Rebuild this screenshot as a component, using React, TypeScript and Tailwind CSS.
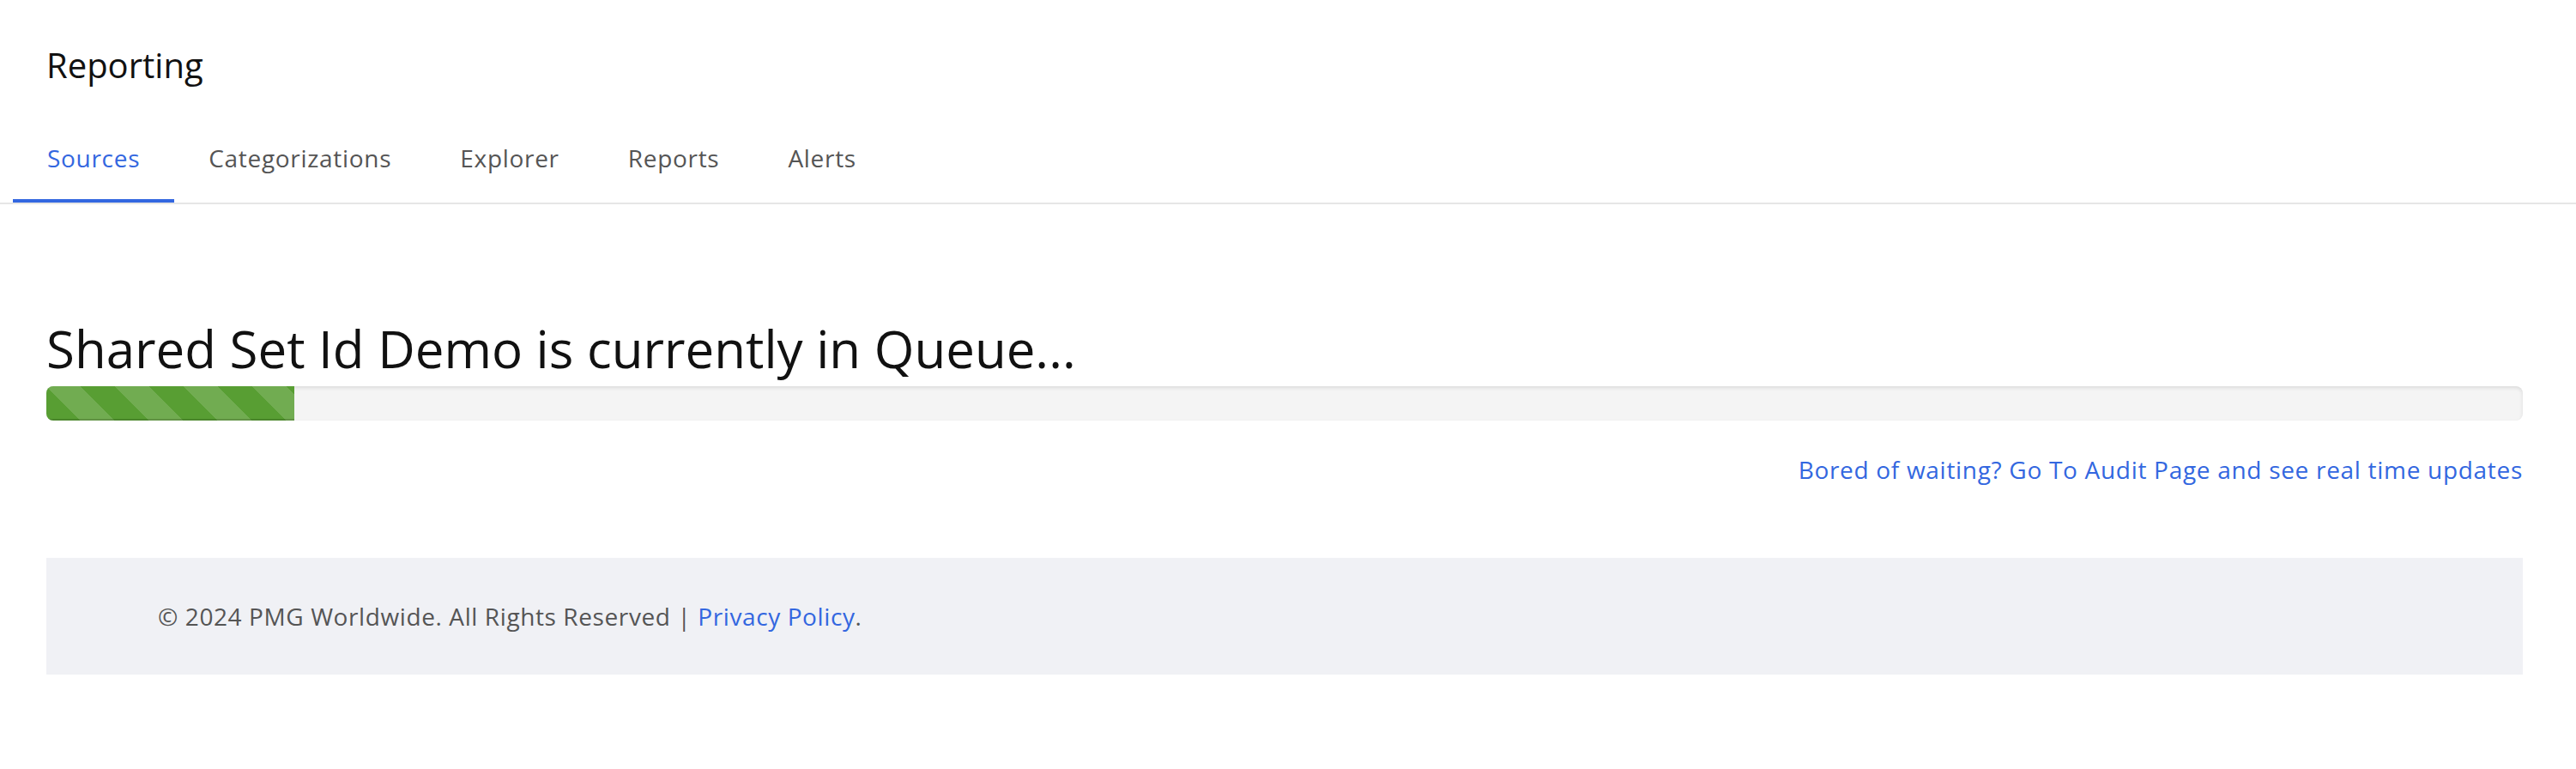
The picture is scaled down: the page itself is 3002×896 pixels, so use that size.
const tabs = ['Sources', 'Categorizations', 'Explorer', 'Reports', 'Alerts']

const App = () => {
    return (
        <div className="min-h-[896px] w-full bg-white font-['Open_Sans',sans-serif]">
            <header className="pl-[54px] pt-[52px]">
                <h1 className="text-[40px] leading-[48px] text-[#111]">Reporting</h1>
            </header>

            <nav className="mt-[36px] flex border-b-2 border-[#e6e6e6] pl-[15px]">
                {tabs.map((tab, i) => (
                    <a
                        key={tab}
                        href="#"
                        className={
                            i === 0
                                ? 'border-b-4 border-[#3367e0] px-[40px] pt-[28px] pb-[28px] text-[28px] leading-[40px] tracking-[0.7px] text-[#3367e0]'
                                : 'border-b-4 border-transparent px-[40px] pt-[28px] pb-[28px] text-[28px] leading-[40px] tracking-[0.7px] text-[#555]'
                        }
                    >
                        {tab}
                    </a>
                ))}
            </nav>

            <main className="pl-[54px] pr-[62px]">
                <h2 className="mt-[132px] text-[60px] leading-[72px] text-[#111]">
                    Shared Set Id Demo is currently in Queue...
                </h2>

                <div className="mt-[8px] h-[40px] w-full overflow-hidden rounded-[8px] bg-[#f4f4f4] shadow-[inset_0_2px_4px_rgba(0,0,0,0.1)]">
                    <div className="h-full w-[10%] bg-[#589e33] bg-[linear-gradient(45deg,rgba(255,255,255,0.15)_25%,transparent_25%,transparent_50%,rgba(255,255,255,0.15)_50%,rgba(255,255,255,0.15)_75%,transparent_75%,transparent)] bg-[length:80px_80px] shadow-[inset_0_-2px_0_rgba(0,0,0,0.15)]" />
                </div>

                <div className="mt-[37px] flex justify-end">
                    <a href="#" className="text-[28px] leading-[40px] tracking-[0.7px] text-[#3367e0]">
                        Bored of waiting? Go To Audit Page and see real time updates
                    </a>
                </div>

                <footer className="mt-[83px] flex h-[136px] items-center bg-[#f0f1f5] pl-[130px]">
                    <p className="text-[28px] leading-[40px] tracking-[0.6px] text-[#555]">
                        © 2024 PMG Worldwide. All Rights Reserved |{' '}
                        <a href="#" className="text-[#3367e0]">
                            Privacy Policy
                        </a>
                        .
                    </p>
                </footer>
            </main>
        </div>
    )
}

export default App
